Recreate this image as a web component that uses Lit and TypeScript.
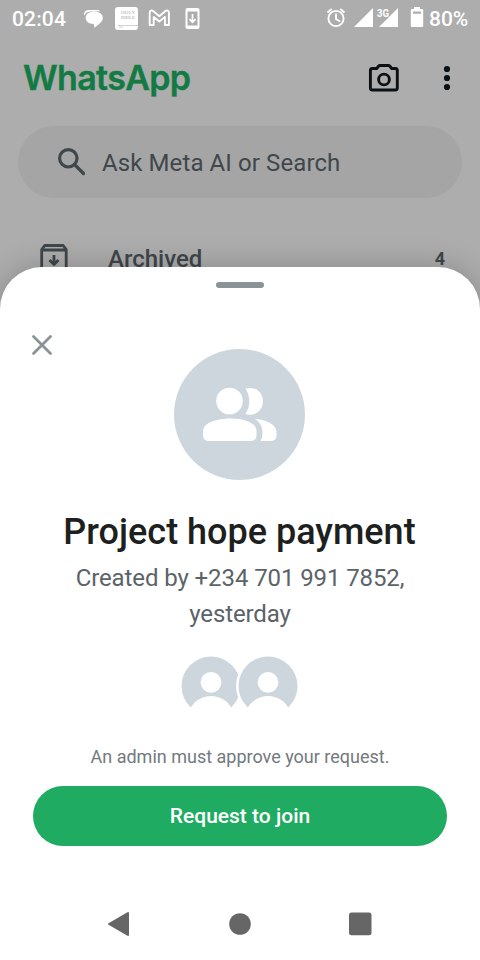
import { LitElement, html, css } from "lit";
import { customElement } from "lit/decorators.js";

@customElement("status-bar")
class StatusBar extends LitElement {
  static styles = css`
    :host { display: flex; height: 36px; padding: 0 12px; box-sizing: border-box; color: #fff; font: 500 21px/38px Roboto, sans-serif; white-space: nowrap; }
    svg { display: block; flex: none; height: 36px; }
    .time { width: 71px; letter-spacing: 0.15px; }
    .gap { flex: 1; }
    .pct { width: 39px; }
    .tiny { font: 700 10px Roboto, sans-serif; }
    .book { font: 400 5px "Liberation Serif", serif; }
  `;
  render() {
    return html`
      <span class="time">02:04</span>
      <svg width="120" viewBox="83 0 120 36" fill="#fff">
        <path d="M84.300 15.500c-1.200-3.500 1.500-5.500 5.200-5.500h6.500c2 0 3.500.5 4.500 1.300l-9 .2c-4 .1-6 1.500-7.200 4z"/>
        <path d="M94 11.500c5.300 0 8.800 2.500 8.800 6.300 0 4-3.300 5.700-8.300 9.900l-.8-3.700c-4.800 0-8-2.300-8-6.200 0-4 3.700-6.300 8.300-6.300z"/>
        <rect x="115" y="7" width="23" height="23" rx="3"/>
        <path d="M118 25.500h20M119 27h4" stroke="#ccc" stroke-width=".9"/>
        <text class="book" x="121" y="14" textLength="14" fill="#aaa">HOLY</text>
        <text class="book" x="121" y="19" textLength="14" fill="#aaa">BIBLE</text>
        <path d="M149.700 25V12.500c0-2 2-2.700 3.400-1.500l6.200 5.200 6.200-5.200c1.400-1.200 3.400-.5 3.400 1.500V25h-4v-8l-5.600 4.600-5.600-4.600v8z" fill="none" stroke="#fff" stroke-width="1.900" stroke-linejoin="round"/>
        <rect x="185.500" y="8" width="14" height="21" rx="2"/>
        <path d="M187.500 11.500h10v14h-10z" fill="#adadad"/>
        <path d="M192.500 14v8M189.500 19.200l3 3 3-3" fill="none" stroke="#fff" stroke-width="1.700"/>
      </svg>
      <span class="gap"></span>
      <svg width="103" viewBox="326 0 103 36" fill="#fff">
        <circle cx="336" cy="18.500" r="7.600" fill="none" stroke="#fff" stroke-width="1.900"/>
        <path d="M327.500 12.500l4.300-3.600M344.500 12.500l-4.300-3.600M336 13.500v5.500l4 2.500" fill="none" stroke="#fff" stroke-width="1.900"/>
        <path d="M354 27L373 8v19zM379 27l19-19v19z"/>
        <text class="tiny" x="377" y="16.500" textLength="12" lengthAdjust="spacingAndGlyphs">3G</text>
        <path d="M414 7h6v2h2.200q1 0 1 1v16q0 1-1 1h-10.400q-1 0-1-1v-16q0-1 1-1h2.200z"/>
        <path d="M413 11.500h8v2.200h-8z" fill="#adadad"/>
      </svg>
      <span class="pct">80%</span>`;
  }
}

@customElement("chat-list")
class ChatList extends LitElement {
  static styles = css`
    :host { display: block; color: #3f474b; font-family: Roboto, sans-serif; }
    svg { display: block; flex: none; }
    .bar { display: flex; align-items: center; height: 84px; padding: 0 24px; }
    .brand { flex: 1; margin-left: -1px; color: #137a44; font: 600 34px/84px Inter, sans-serif; letter-spacing: -0.65px; -webkit-text-stroke: 0.4px #137a44; }
    .search { display: flex; align-items: center; height: 72px; margin: 6px 18px 0; padding-left: 36px; border-radius: 36px; background: #a5a5a5; font-size: 24px; line-height: 72px; letter-spacing: 0.1px; }
    .search span { margin: 2px 0 0 12px; }
    .row { display: flex; align-items: center; height: 72px; margin-top: 25px; padding: 0 35px 0 36px; font-weight: 500; font-size: 24px; }
    .label { flex: 1; margin-left: 36px; }
    .count { margin-top: -2px; font-size: 18px; font-weight: 700; }
  `;
  render() {
    return html`
      <div class="bar">
        <div class="brand">WhatsApp</div>
        <svg width="88" height="36" viewBox="368 60 88 36">
          <path d="M373.200 68.500h3.500l2-2.500q.5-.5 1.200-.5h8.600q.7 0 1.200.5l2 2.500h3.600q2 0 2 2v17.500q0 2-2 2h-22.900q-2 0-2-2v-17.500q0-2 2-2z" fill="none" stroke="#0b1014" stroke-width="2.900"/>
          <circle cx="384" cy="79.500" r="5.400" fill="none" stroke="#0b1014" stroke-width="2.900"/>
          <g fill="#0b1014"><circle cx="447" cy="69" r="3.100"/><circle cx="447" cy="78" r="3.100"/><circle cx="447" cy="87" r="3.100"/></g>
        </svg>
      </div>
      <div class="search">
        <svg width="36" height="36" viewBox="54 144 36 36" fill="none" stroke="#3f474b" stroke-width="3.200">
          <circle cx="68.300" cy="158.300" r="8.700"/><path d="M74.500 164.500l9 9" stroke-linecap="round"/>
        </svg>
        <span>Ask Meta AI or Search</span>
      </div>
      <div class="row">
        <svg width="36" height="36" viewBox="36 241 36 36" fill="none" stroke="#3f474b" stroke-width="2.800" stroke-linejoin="round">
          <path d="M41.700 249.500l3-4h18.500l3 4v20H41.700zM42 250h24"/><path d="M54 255v9M49.500 260l4.500 4.500 4.500-4.500"/>
        </svg>
        <span class="label">Archived</span><span class="count">4</span>
      </div>`;
  }
}

@customElement("join-sheet")
class JoinSheet extends LitElement {
  static styles = css`
    :host { display: flex; flex-direction: column; box-sizing: border-box; background: #fff; border-radius: 42px 42px 0 0; box-shadow: 0 0 30px rgba(0, 0, 0, 0.22); font-family: Roboto, sans-serif; text-align: center; color: #5b6368; }
    svg { display: block; }
    .handle { align-self: center; width: 48px; height: 6px; margin-top: 15px; border-radius: 3px; background: #8a9397; }
    .close { margin: 45px 0 0 30px; }
    .group { align-self: center; width: 132px; height: 132px; margin: -9px 2px 0 0; }
    .title { margin: 27px 1px 0 0; font: 500 36px/50px Roboto, sans-serif; color: #1d1f20; white-space: nowrap; }
    .sub { width: 360px; align-self: center; margin-top: 3px; font-size: 24px; line-height: 36px; letter-spacing: -0.1px; }
    .people { align-self: center; margin-top: 23px; }
    .note { margin-top: 28px; font-size: 18px; line-height: 24px; color: #73797d; }
    .join { height: 60px; margin: 17px 33px 0; border: 0; padding: 0; border-radius: 30px; background: #1fab61; color: #fff; font: 500 21px/60px Roboto, sans-serif; }
    .nav { display: flex; justify-content: space-between; margin: 60px 107px 0; }
  `;
  render() {
    return html`
      <div class="handle"></div>
      <svg class="close" width="24" height="24" viewBox="30 333 24 24"><path d="M33.500 336.500l17 17M50.500 336.500l-17 17" stroke="#8a9397" stroke-width="2.800" stroke-linecap="round"/></svg>
      <svg class="group" viewBox="173 348 132 132" fill="#fff">
        <circle cx="239.500" cy="414.500" r="65.500" fill="#ced6dd"/>
        <circle cx="229.500" cy="401" r="13.300"/>
        <path d="M245.500 388.500c10-2.500 17.500 4 17.500 12.800 0 9-8 15.500-17.500 12.800 5-7.500 5-18 0-25.600z"/>
        <path d="M203 431c0-16 53.500-17 53.500 0v4q0 6-6 6h-41.500q-6 0-6-6z"/>
        <path d="M255 419c10 .5 21.500 5 21.500 13v3q0 6-6 6h-10q2-3 2-8c0-6-2-10-7.500-14z"/>
      </svg>
      <div class="title">Project hope payment</div>
      <div class="sub">Created by +234 701 991 7852, yesterday</div>
      <svg class="people" width="120" height="62" viewBox="180 655 120 62">
        <g>
          <circle cx="211" cy="686" r="29.500" fill="#ced6dd"/>
          <circle cx="211" cy="682.300" r="10.400" fill="#fff"/>
          <path d="M190 709c4-8 12-13 21-13s17 5 21 13v8h-42z" fill="#fff"/>
        </g>
        <circle cx="268" cy="686" r="32" fill="#fff"/>
        <g>
          <circle cx="268" cy="686" r="29.500" fill="#ced6dd"/>
          <circle cx="268" cy="682.300" r="10.400" fill="#fff"/>
          <path d="M247 709c4-8 12-13 21-13s17 5 21 13v8h-42z" fill="#fff"/>
        </g>
      </svg>
      <div class="note">An admin must approve your request.</div>
      <button class="join">Request to join</button>
      <div class="nav">
        <svg width="24" height="36" viewBox="107 906 24 36"><path d="M109 924l19-11v22z" fill="#666" stroke="#666" stroke-width="2" stroke-linejoin="round"/></svg>
        <svg width="24" height="36" viewBox="228 906 24 36"><circle cx="240" cy="924" r="10.800" fill="#666"/></svg>
        <svg width="24" height="36" viewBox="349 906 24 36"><rect x="349" y="912.500" width="22.500" height="22.800" rx="2.500" fill="#666"/></svg>
      </div>`;
  }
}

@customElement("app-root")
class AppRoot extends LitElement {
  static styles = css`
    :host { display: block; position: relative; width: 480px; height: 960px; overflow: hidden; background: #adadad; }
    join-sheet { position: absolute; inset: 267px 0 0; }
  `;
  render() {
    return html`<status-bar></status-bar><chat-list></chat-list><join-sheet></join-sheet>`;
  }
}
